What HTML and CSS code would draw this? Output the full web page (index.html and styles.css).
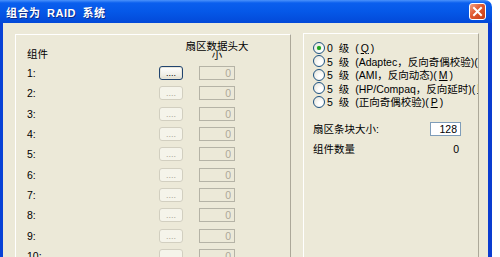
FILE: index.html
```html
<!DOCTYPE html>
<html lang="zh-CN">
<head>
    <meta charset="UTF-8">
    <meta name="viewport" content="width=device-width, initial-scale=1.0">
    <title>组合为 RAID 系统</title>
    <link rel="stylesheet" href="styles.css">
</head>
<body>
    <div class="window">
        <div class="titlebar">
            <span class="title">组合为 RAID 系统</span>
            <span class="close">
                <svg width="11" height="11" viewBox="0 0 11 11">
                    <path d="M2 2 L9 9 M9 2 L2 9" stroke="#fff" stroke-width="2" stroke-linecap="square"/>
                </svg>
            </span>
        </div>
        <div class="client">
            <div class="disks">
                <div class="head-label">组件</div>
                <div class="head-size">扇区数据头大小</div>

                <div class="num">1:</div>
                <button class="browse focus">....</button>
                <input class="size" value="0" disabled>

                <div class="num">2:</div>
                <button class="browse" disabled>....</button>
                <input class="size" value="0" disabled>

                <div class="num">3:</div>
                <button class="browse" disabled>....</button>
                <input class="size" value="0" disabled>

                <div class="num">4:</div>
                <button class="browse" disabled>....</button>
                <input class="size" value="0" disabled>

                <div class="num">5:</div>
                <button class="browse" disabled>....</button>
                <input class="size" value="0" disabled>

                <div class="num">6:</div>
                <button class="browse" disabled>....</button>
                <input class="size" value="0" disabled>

                <div class="num">7:</div>
                <button class="browse" disabled>....</button>
                <input class="size" value="0" disabled>

                <div class="num">8:</div>
                <button class="browse" disabled>....</button>
                <input class="size" value="0" disabled>

                <div class="num">9:</div>
                <button class="browse" disabled>....</button>
                <input class="size" value="0" disabled>

                <div class="num">10:</div>
                <button class="browse" disabled>....</button>
                <input class="size" value="0" disabled>
            </div>

            <div class="options">
                <label class="radio"><span class="dot checked"></span>0 级 (<u>Q</u>)</label>
                <label class="radio"><span class="dot"></span>5 级 (Adaptec，反向奇偶校验)(<u>A</u>)</label>
                <label class="radio"><span class="dot"></span>5 级 (AMI，反向动态)(<u>M</u>)</label>
                <label class="radio"><span class="dot"></span>5 级 (HP/Compaq，反向延时)(<u>H</u>)</label>
                <label class="radio"><span class="dot"></span>5 级 (正向奇偶校验)(<u>P</u>)</label>

                <div class="field first">
                    <span>扇区条块大小:</span>
                    <input class="stripe" value="128">
                </div>
                <div class="field">
                    <span>组件数量</span>
                    <span class="count">0</span>
                </div>
            </div>
        </div>
    </div>
</body>
</html>
```

FILE: styles.css
```css
body {
    margin: 0;
    height: 257px;
    overflow: hidden;
    background: #fff;
    font-family: "Liberation Sans", "Noto Sans CJK SC", sans-serif;
    font-size: 10.5px;
    color: #000;
}
.window {
    width: 492px;
    height: 257px;
    display: flex;
    flex-direction: column;
}
.titlebar {
    height: 23px;
    box-sizing: border-box;
    padding: 0 6px 0 6px;
    display: flex;
    align-items: center;
    justify-content: space-between;
    background: linear-gradient(#4a92fb 0, #0a5fee 3px, #0558e8 50%, #0349d8 100%);
    border-top-right-radius: 7px;
    color: #fff;
}
.title {
    font-weight: bold;
    font-size: 11px;
    word-spacing: 3px;
    letter-spacing: 0.5px;
    text-shadow: 1px 1px #0b2c8c;
}
.close {
    width: 17px;
    height: 17px;
    box-sizing: border-box;
    border: 1px solid #fff;
    border-radius: 3px;
    background: linear-gradient(135deg, #f2a286, #e0582e 45%, #c53c14);
    display: flex;
    align-items: center;
    justify-content: center;
}
.client {
    flex: 1;
    display: flex;
    align-items: flex-start;
    gap: 12px;
    padding: 11px 10px 0 12px;
    background: #ece9d8;
    border-left: 3px solid #0842d6;
    border-right: 4px solid #0a3cd0;
    overflow: hidden;
}
.disks {
    width: 276px;
    height: 300px;
    flex-shrink: 0;
    box-sizing: border-box;
    border: 1px solid;
    border-color: #fff #aca899 #aca899 #fff;
    padding: 0 55px 0 11px;
    display: grid;
    grid-template-columns: 1fr 24px 36px;
    column-gap: 16px;
    grid-template-rows: 28px;
    grid-auto-rows: 20.33px;
    align-items: center;
    align-content: start;
}
.head-label {
    align-self: end;
    margin-bottom: 3px;
    line-height: 12px;
    grid-column: 1;
}
.head-size {
    grid-column: 3;
    align-self: end;
    margin: 0 -16px 3px;
    text-align: center;
    line-height: 9px;
}
.num {
    grid-column: 1;
}
.browse {
    width: 24px;
    height: 14px;
    padding: 0;
    font-family: inherit;
    font-size: 9px;
    line-height: 12px;
    border: 1px solid #d2cfc0;
    border-radius: 3px;
    background: #f5f4ea;
    color: #aca899;
}
.browse.focus {
    border-color: #21446f;
    background: linear-gradient(#fff, #efeee6 70%, #dcdacb);
    box-shadow: inset 0 0 0 1px #e8e6da;
    color: #000;
}
.size {
    width: 36px;
    height: 14px;
    box-sizing: border-box;
    margin: 0;
    padding: 0 3px;
    border: 1px solid #b5b3a6;
    background: #ece9d8;
    color: #aca899;
    font-family: inherit;
    font-size: 10.5px;
    text-align: right;
}
.options {
    width: 176px;
    height: 300px;
    flex-shrink: 0;
    box-sizing: border-box;
    margin-top: -1px;
    border: 1px solid;
    border-color: #fff #aca899 #aca899 #fff;
    padding: 7px 17px 0 9px;
    overflow: hidden;
    white-space: nowrap;
}
.radio {
    display: flex;
    align-items: center;
    gap: 2px;
    height: 13.5px;
    word-spacing: 3px;
}
.dot {
    width: 12px;
    height: 12px;
    flex-shrink: 0;
    box-sizing: border-box;
    border: 1px solid #1d5281;
    border-radius: 50%;
    background: radial-gradient(circle at 65% 65%, #fff 20%, #e2e0d4);
    display: flex;
    align-items: center;
    justify-content: center;
}
.dot.checked::after {
    content: "";
    width: 4px;
    height: 4px;
    border-radius: 50%;
    background: #21a121;
    box-shadow: 0 0 1px #4cc04c;
}
.field {
    display: flex;
    align-items: center;
    justify-content: space-between;
    height: 20px;
}
.field.first {
    margin-top: 10px;
}
.stripe {
    width: 31px;
    height: 14px;
    box-sizing: border-box;
    margin: 0;
    padding: 0 3px;
    border: 1px solid #7f9db9;
    background: #fff;
    font-family: inherit;
    font-size: 10.5px;
    text-align: right;
}
.count {
    padding-right: 2px;
}
```
